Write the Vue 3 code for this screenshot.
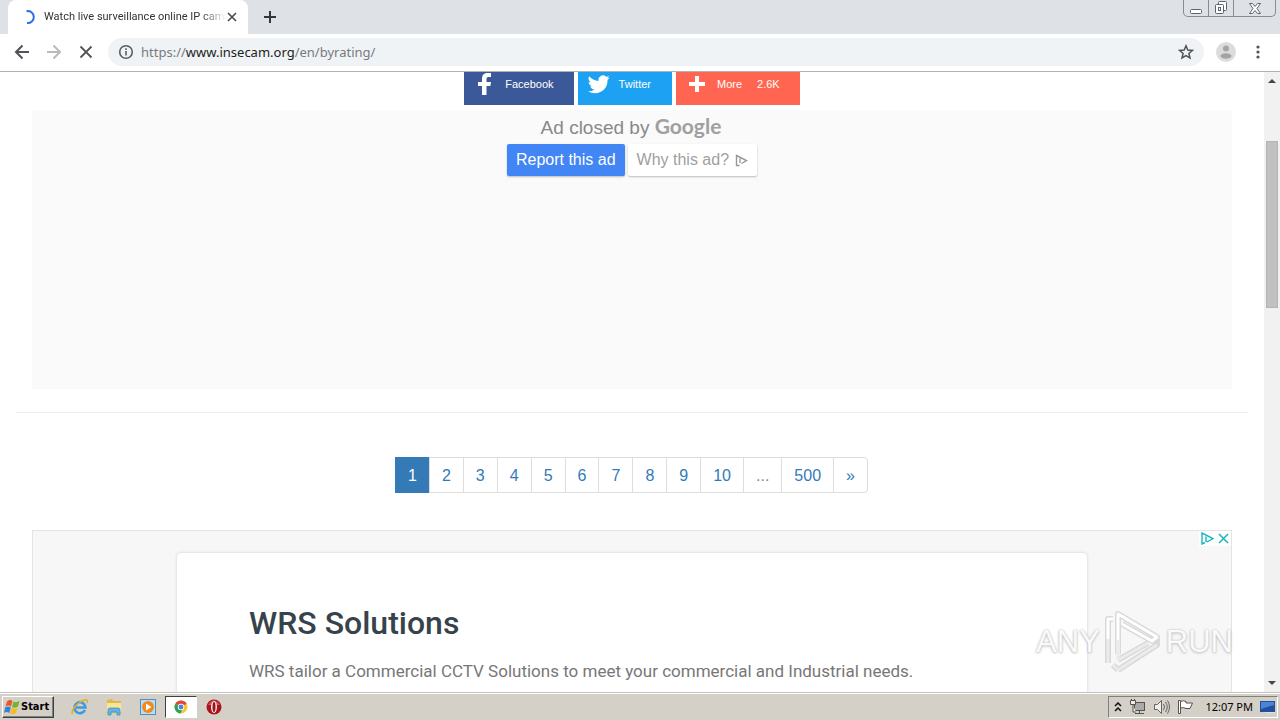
<script setup>
import { ref } from 'vue'

const url = ref('https://www.insecam.org/en/byrating/')
const pages = ['1', '2', '3', '4', '5', '6', '7', '8', '9', '10', '...', '500', '»']
</script>

<template>
  <div class="desktop">
    <header class="tabstrip">
      <div class="tab">
        <svg class="spinner" width="16" height="16" viewBox="0 0 16 16" aria-hidden="true">
          <path d="M6.500 2.200A6 6 0 1 1 7 14" fill="none" stroke="#2f6fe4" stroke-width="2" />
        </svg>
        <span class="tab-title">Watch live surveillance online IP cam</span>
        <button class="plain tab-close" aria-label="Close tab">
          <svg width="10" height="10" viewBox="0 0 10 10"><path d="M1 1l8 8M9 1l-8 8" stroke="#4a4d51" stroke-width="1.700" /></svg>
        </button>
      </div>
      <button class="plain new-tab" aria-label="New tab">
        <svg width="12" height="12" viewBox="0 0 12 12"><path d="M6 0v12M0 6h12" stroke="#33363a" stroke-width="2" /></svg>
      </button>
      <div class="window-buttons">
        <button aria-label="Minimize">
          <svg width="14" height="14" viewBox="0 0 14 14"><rect x="1.500" y="8.500" width="11" height="4" rx="1" fill="#fff" stroke="#5c6270" /></svg>
        </button>
        <button aria-label="Restore">
          <svg width="14" height="14" viewBox="0 0 14 14" fill="#fff" stroke="#5c6270">
            <rect x="4.500" y="0.500" width="8" height="9" rx="1" /><rect x="1.500" y="3.500" width="8" height="9" rx="1" /><rect x="4.500" y="6.500" width="2" height="3" />
          </svg>
        </button>
        <button class="wide" aria-label="Close">
          <svg width="14" height="14" viewBox="0 0 14 14"><path d="M1.500 2.500h3l2.500 3 2.500-3h3L9 7.500l3.500 5h-3L7 9.500l-2.500 3h-3L5 7.500z" fill="#fff" stroke="#5c6270" /></svg>
        </button>
      </div>
    </header>

    <nav class="toolbar">
      <button class="plain tool" aria-label="Back">
        <svg width="16" height="16" viewBox="0 0 16 16" fill="none" stroke="#505357" stroke-width="2"><path d="M15 8H2M8.500 1.500L2 8l6.500 6.500" /></svg>
      </button>
      <button class="plain tool" aria-label="Forward">
        <svg width="16" height="16" viewBox="0 0 16 16" fill="none" stroke="#b9bbbd" stroke-width="2"><path d="M1 8h13M7.500 1.500L14 8l-6.500 6.500" /></svg>
      </button>
      <button class="plain tool" aria-label="Stop">
        <svg width="14" height="14" viewBox="0 0 14 14" stroke="#505357" stroke-width="1.800"><path d="M1.500 1.500l11 11M12.500 1.500l-11 11" /></svg>
      </button>
      <div class="omnibox">
        <svg width="16" height="16" viewBox="0 0 16 16" fill="none" stroke="#5a5d61" stroke-width="1.600" aria-hidden="true"><circle cx="8" cy="8" r="6.300" /><path d="M8 7v4.500M8 4.300v1.600" /></svg>
        <label class="url" for="address">
          <span aria-hidden="true">https://<b>www.insecam.org</b>/en/byrating/</span>
          <input id="address" v-model="url" type="text" aria-label="Address" />
        </label>
        <button class="plain" aria-label="Bookmark">
          <svg width="16" height="16" viewBox="0 0 16 16" fill="none" stroke="#505357" stroke-width="1.500"><path d="M8 1.800l1.800 4.200 4.600.4-3.500 3 1.100 4.500-4-2.400-4 2.400 1.100-4.500-3.500-3 4.600-.4z" /></svg>
        </button>
      </div>
      <button class="plain profile" aria-label="Profile">
        <svg width="20" height="20" viewBox="0 0 20 20"><circle cx="10" cy="10" r="10" fill="#dcdcdd" /><circle cx="10" cy="6.500" r="3" fill="#a3a4a6" /><ellipse cx="10" cy="14" rx="5.500" ry="2.800" fill="#a3a4a6" /></svg>
      </button>
      <button class="plain menu" aria-label="Menu">
        <svg width="4" height="14" viewBox="0 0 4 14" fill="#505357"><circle cx="2" cy="2" r="1.600" /><circle cx="2" cy="7" r="1.600" /><circle cx="2" cy="12" r="1.600" /></svg>
      </button>
    </nav>

    <div class="viewport">
      <main class="page">
        <div class="share">
          <button class="facebook">
            <svg width="22" height="24" viewBox="0 0 22 24"><path d="M8 23v-9H4v-4h4V7c0-4 2-6 5.500-6H17v4h-2.500C13 5 12.500 5.700 12.500 7v3H17l-.6 4h-3.900v9z" fill="#fff" /></svg>
            <span>Facebook</span>
          </button>
          <button class="twitter">
            <svg width="22" height="22" viewBox="0 0 24 24"><path d="M23.600 4.900a9.700 9.700 0 0 1-2.800.8 4.900 4.900 0 0 0 2.100-2.700 9.700 9.700 0 0 1-3.100 1.200 4.900 4.900 0 0 0-8.300 4.500A13.900 13.900 0 0 1 1.400 3.600a4.900 4.900 0 0 0 1.500 6.500 4.900 4.900 0 0 1-2.200-.6 4.900 4.900 0 0 0 3.900 4.900 4.900 4.900 0 0 1-2.200.1 4.900 4.900 0 0 0 4.600 3.400A9.900 9.900 0 0 1 0 19.900a13.900 13.900 0 0 0 21.300-12.400 10 10 0 0 0 2.300-2.600z" fill="#fff" /></svg>
            <span>Twitter</span>
          </button>
          <button class="more">
            <svg width="20" height="20" viewBox="0 0 20 20"><path d="M8 2h4v6h6v4h-6v6H8v-6H2V8h6z" fill="#fff" /></svg>
            <span>More</span><span class="count">2.6K</span>
          </button>
        </div>

        <section class="closed-ad">
          <p class="closed-by">Ad closed by <span class="google">Google</span></p>
          <div class="ad-actions">
            <button class="report">Report this ad</button>
            <button class="why">Why this ad?
              <svg width="13" height="13" viewBox="0 0 13 13" fill="none" stroke="#999" stroke-width="1.400"><path d="M4.500 11.500h-3V1.500l10 5-5 3M5 4.500v4.500" /></svg>
            </button>
          </div>
        </section>

        <hr />

        <nav class="pagination" aria-label="Pages">
          <a v-for="(p, i) in pages" :key="p" href="#" :class="{ active: i === 0, gap: p === '...' }">{{ p }}</a>
        </nav>

        <section class="banner">
          <div class="choices">
            <button class="plain" aria-label="AdChoices">
              <svg width="13" height="13" viewBox="0 0 13 13" fill="none" stroke="#19b5c1" stroke-width="1.400"><path d="M4 10.500L1 12V1l11 5.500L6 10M5 4.500V10" /></svg>
            </button>
            <button class="plain" aria-label="Close ad">
              <svg width="11" height="11" viewBox="0 0 11 11" stroke="#19b5c1" stroke-width="1.500"><path d="M1 1l9 9M10 1l-9 9" /></svg>
            </button>
          </div>
          <article class="card">
            <h1>WRS Solutions</h1>
            <p>WRS tailor a Commercial CCTV Solutions to meet your commercial and Industrial needs.</p>
          </article>
        </section>
      </main>

      <div class="scrollbar" aria-hidden="true">
        <svg width="16" height="16" viewBox="0 0 16 16"><path d="M4 11h8L8 7z" fill="#444" /></svg>
        <div class="track"><div class="thumb"></div></div>
        <svg width="16" height="16" viewBox="0 0 16 16"><path d="M4 5h8L8 9z" fill="#444" /></svg>
      </div>

      <div class="watermark">
        <span>ANY</span>
        <svg width="60" height="64" viewBox="0 0 60 64" fill="none" stroke-linejoin="round">
          <path d="M15 44V4l39 23-5 4-30-17M10 9H5v44M15 50l30-17M15 60l39-25v-6M10 55l5 5" stroke="#d9d9d9" stroke-width="6" />
          <path d="M15 44V4l39 23-5 4-30-17M10 9H5v20" stroke="#fff" stroke-width="3" />
          <path d="M5 29v24M15 50l30-17M15 60l39-25M10 55l5 5M15 30v20" stroke="#ebebeb" stroke-width="3" />
        </svg>
        <span>RUN</span>
      </div>
    </div>

    <footer class="taskbar">
      <button class="start">
        <svg width="17" height="16" viewBox="0 0 17 16">
          <path d="M3 2.500Q6-.2 8.500 2L7 7.500Q4 5.500 1.500 7.500z" fill="#e9572b" /><path d="M9.500 2.500Q12 4 15.500 2L14 7.500Q11 9.500 8 8z" fill="#70b52d" />
          <path d="M1.200 8.500Q4 6.500 6.800 8.500L5.300 14Q2.500 12 0 14z" fill="#3484d5" /><path d="M7.700 9Q11 10.500 13.700 8.500L12 14Q9 16 6.200 14.500z" fill="#f8b922" />
        </svg>
        Start
      </button>
      <div class="launchers">
        <button class="plain" aria-label="Internet Explorer">
          <svg width="18" height="18" viewBox="0 0 18 18" fill="none"><path d="M14 12A5.500 5.500 0 1 1 14.500 9.500H5" stroke="#3d9be0" stroke-width="2.600" /><path d="M1.500 16C-.5 13 6 5 12 2.500c4-1.700 5.200-.5 4 2.500" stroke="#e3ad28" stroke-width="1.500" /></svg>
        </button>
        <button class="plain" aria-label="Explorer">
          <svg width="18" height="18" viewBox="0 0 18 18"><path d="M2 2l5-1 1 2h8v12H2z" fill="#e2b74b" /><path d="M2 5h14v9H2z" fill="#f8e597" /><path d="M3 17v-5q0-2 2-2h8q2 0 2 2v5h-3v-3H6v3z" fill="#63b3df" stroke="#3a8dbd" stroke-width=".7" /></svg>
        </button>
        <button class="plain" aria-label="Media Player">
          <svg width="18" height="18" viewBox="0 0 18 18"><rect x="1.500" y="1.500" width="15" height="15" fill="#b9def5" stroke="#4a8fc6" /><circle cx="9" cy="9" r="6" fill="#f18a1c" /><path d="M7 5.500v7L12.500 9z" fill="#fff" /></svg>
        </button>
        <button class="plain running" aria-label="Chrome">
          <svg width="14" height="14" viewBox="0 0 14 14"><circle cx="7" cy="7" r="6.500" fill="#fbc62c" /><path d="M7 7L1.400 3.700A6.500 6.500 0 0 1 12.600 3.700z" fill="#df493b" /><path d="M7 7L1.400 3.700A6.500 6.500 0 0 0 6.500 13.500L9 8z" fill="#2ea05a" /><circle cx="7" cy="7" r="3.200" fill="#fff" /><circle cx="7" cy="7" r="2.400" fill="#4284e5" /></svg>
        </button>
        <button class="plain" aria-label="Opera">
          <svg width="16" height="16" viewBox="0 0 16 16"><circle cx="8" cy="8" r="7.500" fill="#ab141c" /><path d="M2 6Q8-3 14 6" fill="#d55358" /><ellipse cx="8" cy="8" rx="3" ry="6" fill="#eee" /><ellipse cx="8" cy="8" rx="1.500" ry="5" fill="#9b1219" /></svg>
        </button>
      </div>
      <div class="tray">
        <svg width="8" height="10" viewBox="0 0 8 10" fill="none" stroke="#111" stroke-width="1.500"><path d="M1 4l3-3 3 3M1 9l3-3 3 3" /></svg>
        <svg width="17" height="16" viewBox="0 0 17 16" fill="#eee" stroke="#55534e"><rect x="5.500" y="3.500" width="10" height="8" fill="#aaa" /><path d="M6 14.500h9M10.500 12v2" /><path d="M1.500 1.500h5v4h-5zM4 6v7h3M2.500 0v2M5.500 0v2" /></svg>
        <svg width="17" height="16" viewBox="0 0 17 16" fill="#eee" stroke="#66645f"><path d="M1.500 5.500h3l4-4v13l-4-4h-3z" /><path d="M10.500 5q2 3 0 6M12.500 3q3.500 5 0 10M14.500 1.500q4 6.500 0 13" fill="none" /></svg>
        <svg width="17" height="16" viewBox="0 0 17 16" fill="#fff" stroke="#55534e"><path d="M1.500 1.500h2v13h-2z" /><path d="M3.500 2.500q3-1.500 5.500 0v1.500h6.500L13 9.500H9Q6.500 8 3.500 9z" /></svg>
        <time>12:07 PM</time>
        <svg width="16" height="14" viewBox="0 0 16 14"><path d="M0 1h15v11H0z" fill="#234f9d" /><path d="M1 2h13v3L1 9z" fill="#4a86d8" /><path d="M5 12h10v1H5z" fill="#d8e2ef" /></svg>
      </div>
    </footer>
  </div>
</template>

<style>
body { margin: 0; overflow: hidden; }
</style>

<style scoped>
* { box-sizing: border-box; }
.desktop { display: flex; flex-direction: column; height: 100vh; background: #fff; font-family: "Liberation Sans", Arial, sans-serif; }
button { margin: 0; padding: 0; font: inherit; }
svg { flex: none; display: block; }
.plain { display: flex; align-items: center; justify-content: center; border: 0; background: none; }

.tabstrip { display: flex; flex: none; height: 34px; padding-left: 8px; background: #dee1e6; }
.tab { display: flex; align-items: center; width: 240px; padding: 0 11px 0 12px; border-radius: 8px 8px 0 0; background: #fff; }
.tab-title { flex: 1; min-width: 0; margin: 0 1px 0 8px; white-space: nowrap; font: 11px/16px Roboto, sans-serif; color: #333; -webkit-mask-image: linear-gradient(to right, #000 86%, transparent); mask-image: linear-gradient(to right, #000 86%, transparent); }
.new-tab { width: 28px; margin-left: 8px; }
.window-buttons { display: flex; height: 17px; margin: 0 4px 0 auto; border: 1px solid #868b98; border-top: 0; border-radius: 0 0 5px 5px; }
.window-buttons button { display: flex; align-items: center; justify-content: center; width: 25px; border: 0; border-right: 1px solid #868b98; background: none; }
.window-buttons .wide { width: 41px; border-right: 0; }

.toolbar { display: flex; flex: none; align-items: center; height: 38px; padding: 0 16px 2px 6px; border-bottom: 1px solid #b2b2b2; }
.tool { width: 32px; height: 28px; }
.omnibox { display: flex; flex: 1; align-items: center; height: 28px; margin-left: 6px; padding: 0 10px; border-radius: 14px; background: #f0f3f5; }
.url { position: relative; flex: 1; margin-left: 7px; font: 13px/20px "Noto Sans", sans-serif; color: #777b80; }
.url b { font-weight: 400; color: #222; }
.url input { position: absolute; inset: 0; width: 100%; padding: 0; border: 0; outline: 0; background: none; font: inherit; color: transparent; }
.profile { width: 20px; margin-left: 12px; }
.menu { width: 12px; margin-left: 16px; }

.viewport { position: relative; display: flex; flex: 1; min-height: 0; }
.page { flex: 1; min-width: 0; padding: 0 16px; overflow: hidden; }
.share { display: flex; justify-content: center; gap: 4px; height: 33px; }
.share button { display: flex; align-items: center; height: 33px; padding: 0 20px 10px 10px; border: 0; color: #fff; font-size: 11px; }
.share span { margin-left: 9px; }
.share .facebook { background: #3b5998; }
.share .twitter { padding-right: 21px; background: #1da1f2; }
.share .more { padding-left: 11px; background: #ff6550; }
.share .more span { margin-left: 10px; }
.share .more .count { margin-left: 15px; }
.closed-ad { height: 279px; margin: 5px 16px 0; padding-top: 2px; background: #fafafa; text-align: center; }
.closed-by { margin: 0 2px 0 0; font-size: 19px; line-height: 28px; color: #888; }
.google { font-family: Lato, sans-serif; font-size: 21px; font-weight: 700; color: #a0a0a0; }
.ad-actions { display: flex; justify-content: center; gap: 3px; margin-top: 2px; }
.ad-actions button { display: flex; align-items: center; gap: 6px; height: 32px; padding: 0 9px; border: 0; border-radius: 2px; box-shadow: 0 1px 2px #bbb; font-size: 16px; line-height: 24px; }
.ad-actions .report { background: #4285f4; color: #fff; }
.ad-actions .why { background: #fff; color: #a0a0a0; }
hr { height: 1px; margin: 23px 0 44px; border: 0; background: #eee; }
.pagination { display: flex; justify-content: center; }
.pagination a { height: 36px; margin-left: -1px; padding: 5px 12px; border: 1px solid #ddd; background: #fff; color: #337ab7; font-size: 16px; line-height: 26px; text-decoration: none; }
.pagination a:last-child { border-radius: 0 4px 4px 0; }
.pagination .active { border-color: #337ab7; background: #337ab7; color: #fff; }
.pagination .gap { color: #888; }
.banner { position: relative; height: 280px; margin: 37px 16px 0; padding: 22px 144px 0; border: 1px solid #e4e4e4; background: #f7f7f7; }
.choices { position: absolute; top: 0; right: 0; display: flex; gap: 4px; padding: 1px 2px; background: #fff; }
.card { height: 100%; padding: 48px 72px; border-radius: 4px; background: #fff; box-shadow: 0 0 3px #ccc; font-family: Roboto, sans-serif; }
.card h1 { margin: 0; font-size: 32px; line-height: 44px; font-weight: 500; color: #37434a; }
.card p { margin: 14px 0 0; font-size: 17px; line-height: 24px; color: #777; white-space: nowrap; }

.scrollbar { display: flex; flex: none; flex-direction: column; width: 16px; background: #f1f1f1; }
.track { flex: 1; padding: 53px 2px 0; }
.thumb { height: 167px; border: 1px solid #b4b4b4; background: #c1c1c1; }
.watermark { position: absolute; right: 47px; bottom: 18px; display: flex; align-items: center; gap: 3px; color: #fafafa; font: 31px/44px "Liberation Sans", sans-serif; text-shadow: 0 0 2px #bbb, 0 1px 3px #c4c4c4; }

.taskbar { display: flex; flex: none; align-items: center; height: 28px; padding: 1px 2px; border-top: 1px solid #c8c4bc; background: #d4d0c8; box-shadow: inset 0 1px #fff; }
.start { display: flex; align-items: center; gap: 0; height: 22px; padding: 0 4px 0 1px; border: 1px solid; border-color: #fff #404040 #404040 #fff; background: #d4d0c8; box-shadow: inset -1px -1px #808080; color: #000; font: bold 11px/16px "DejaVu Sans Condensed", "DejaVu Sans", sans-serif; }
.launchers { display: flex; align-items: center; margin-left: 9px; }
.launchers button { width: 34px; height: 22px; }
.launchers .running { width: 32px; border: 1px solid; border-color: #404040 #fff #fff #404040; background: #fff; }
.tray { display: flex; align-items: center; gap: 7px; height: 22px; margin-left: auto; padding: 0 1px 0 5px; border: 1px solid; border-color: #808080 #fff #fff #808080; }
.tray time { margin-left: 4px; font: 11px/16px "Noto Sans", sans-serif; color: #000; }
</style>
